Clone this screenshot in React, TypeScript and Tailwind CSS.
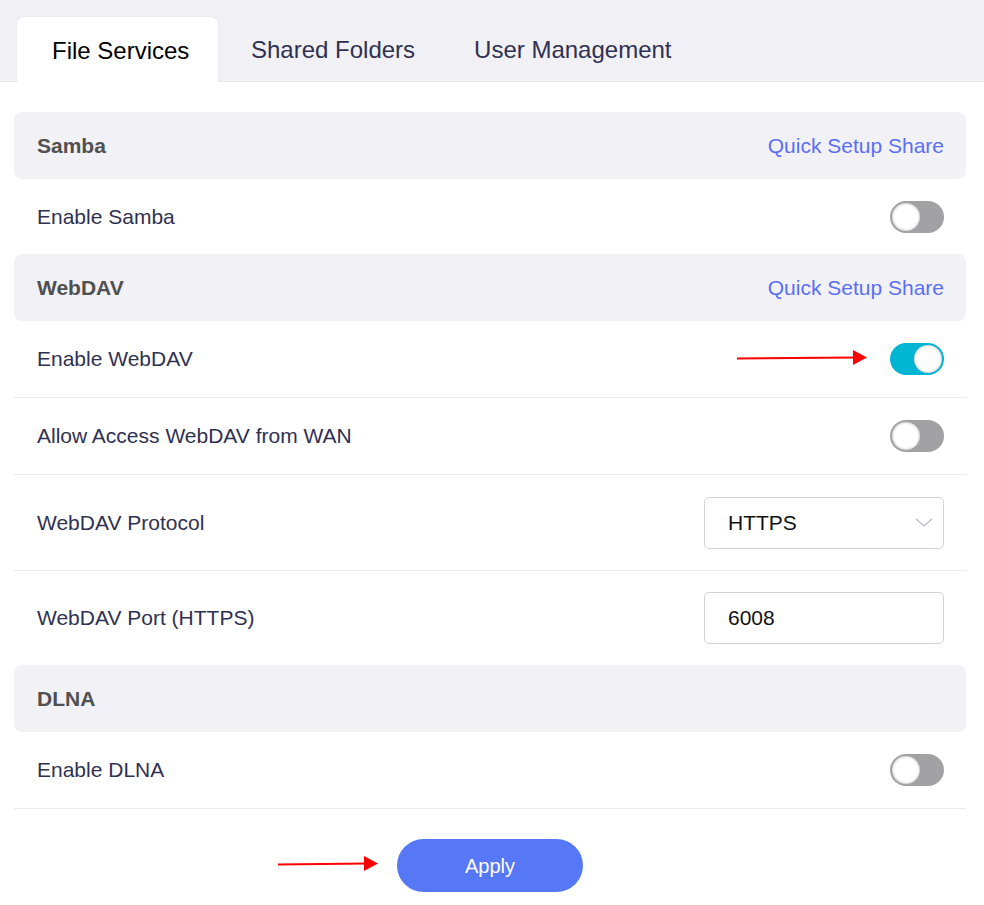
import React, { useState } from 'react';

type ToggleProps = { on: boolean; onChange: () => void };

function Toggle({ on, onChange }: ToggleProps) {
  return (
    <button
      onClick={onChange}
      className={`relative w-[54px] h-[32px] rounded-full shrink-0 ${on ? 'bg-[#00b5d1]' : 'bg-[#a2a2a4]'}`}
    >
      <span
        className={`absolute top-[2px] w-[28px] h-[28px] rounded-full bg-white shadow-[inset_0_0_3px_rgba(0,0,0,0.35)] ${
          on ? 'left-[24px]' : 'left-[2px]'
        }`}
      />
    </button>
  );
}

function SectionHeader({ title, link }: { title: string; link?: string }) {
  return (
    <div className="h-[67px] bg-[#f2f1f6] rounded-[8px] pl-[23px] pr-[22px] flex items-center justify-between">
      <span className="font-bold text-[#505050]">{title}</span>
      {link && <a className="text-[#5a6ff6] cursor-pointer">{link}</a>}
    </div>
  );
}

// row heights follow the screenshot: 75 plain, 77 with a rule, 94/96 for the ones with a field
function Row({ label, children, h, border = true }: { label: string; children: React.ReactNode; h: string; border?: boolean }) {
  return (
    <div
      className={`relative flex items-center justify-between pl-[23px] pr-[22px] ${h} ${
        border ? 'border-b border-[#ebebef]' : ''
      }`}
    >
      <span className="text-[#2f3152]">{label}</span>
      {children}
    </div>
  );
}

function RedArrow({ length }: { length: number }) {
  return (
    <svg width={length} height="18" viewBox={`0 0 ${length} 18`}>
      <line x1="0" y1="9.5" x2={length - 12} y2="8.5" stroke="#ff0000" strokeWidth="2" />
      <polygon points={`${length - 14},1 ${length},8.5 ${length - 14},16`} fill="#ff0000" />
    </svg>
  );
}

export default function App() {
  const [tab, setTab] = useState('File Services');
  const [samba, setSamba] = useState(false);
  const [webdav, setWebdav] = useState(true);
  const [wan, setWan] = useState(false);
  const [dlna, setDlna] = useState(false);
  const [port, setPort] = useState('6008');

  const tabs = ['File Services', 'Shared Folders', 'User Management'];

  return (
    <div className="min-h-screen bg-white font-['Liberation_Sans',Arial,sans-serif] text-[21px]">
      {/* Tab bar */}
      <div className="bg-[#f1f0f5] border-b border-[#e6e6ec] pt-4 pl-4 flex items-end h-[82px]">
        {tabs.map((t, i) => (
          <button
            key={t}
            onClick={() => setTab(t)}
            className={`h-[66px] -mb-px text-[24px] flex items-center ${
              i === 0 ? 'w-[203px] pl-[35px]' : i === 1 ? 'pl-[32px] pr-[28px]' : 'px-[31px]'
            } ${tab === t ? 'bg-white rounded-t-[8px] text-black border border-b-0 border-[#ececf0]' : 'text-[#2f3152]'}`}
          >
            <span className="pt-[2px]">{t}</span>
          </button>
        ))}
      </div>

      {/* Content */}
      <div className="pl-[14px] pr-[18px] pt-[30px]">
        <SectionHeader title="Samba" link="Quick Setup Share" />
        <Row label="Enable Samba" h="h-[75px]" border={false}>
          <Toggle on={samba} onChange={() => setSamba(!samba)} />
        </Row>

        <SectionHeader title="WebDAV" link="Quick Setup Share" />
        <Row label="Enable WebDAV" h="h-[77px]">
          <div className="absolute left-[723px] top-[28px]">
            <RedArrow length={130} />
          </div>
          <Toggle on={webdav} onChange={() => setWebdav(!webdav)} />
        </Row>
        <Row label="Allow Access WebDAV from WAN" h="h-[77px]">
          <Toggle on={wan} onChange={() => setWan(!wan)} />
        </Row>
        <Row label="WebDAV Protocol" h="h-[96px]">
          <div className="w-[240px] h-[52px] border border-[#d3d3da] rounded-[5px] flex items-center justify-between pl-[23px] pr-[10px] text-[#111]">
            <span>HTTPS</span>
            <svg width="18" height="10" viewBox="0 0 18 10" fill="none">
              <path d="M1 1l8 7 8-7" stroke="#b9bcc6" strokeWidth="1.3" />
            </svg>
          </div>
        </Row>
        <Row label="WebDAV Port (HTTPS)" h="h-[94px]" border={false}>
          <input
            value={port}
            onChange={e => setPort(e.target.value)}
            className="w-[240px] h-[52px] border border-[#d3d3da] rounded-[5px] px-[23px] text-[#111] outline-none"
          />
        </Row>

        <SectionHeader title="DLNA" />
        <Row label="Enable DLNA" h="h-[77px]">
          <Toggle on={dlna} onChange={() => setDlna(!dlna)} />
        </Row>

        <div className="relative flex justify-center pt-[30px] pb-[13px]">
          <div className="absolute left-[264px] top-[46px]">
            <RedArrow length={100} />
          </div>
          <button className="w-[186px] h-[53px] rounded-full bg-[#5677f6] text-white text-[20px]">Apply</button>
        </div>
      </div>
    </div>
  );
}
